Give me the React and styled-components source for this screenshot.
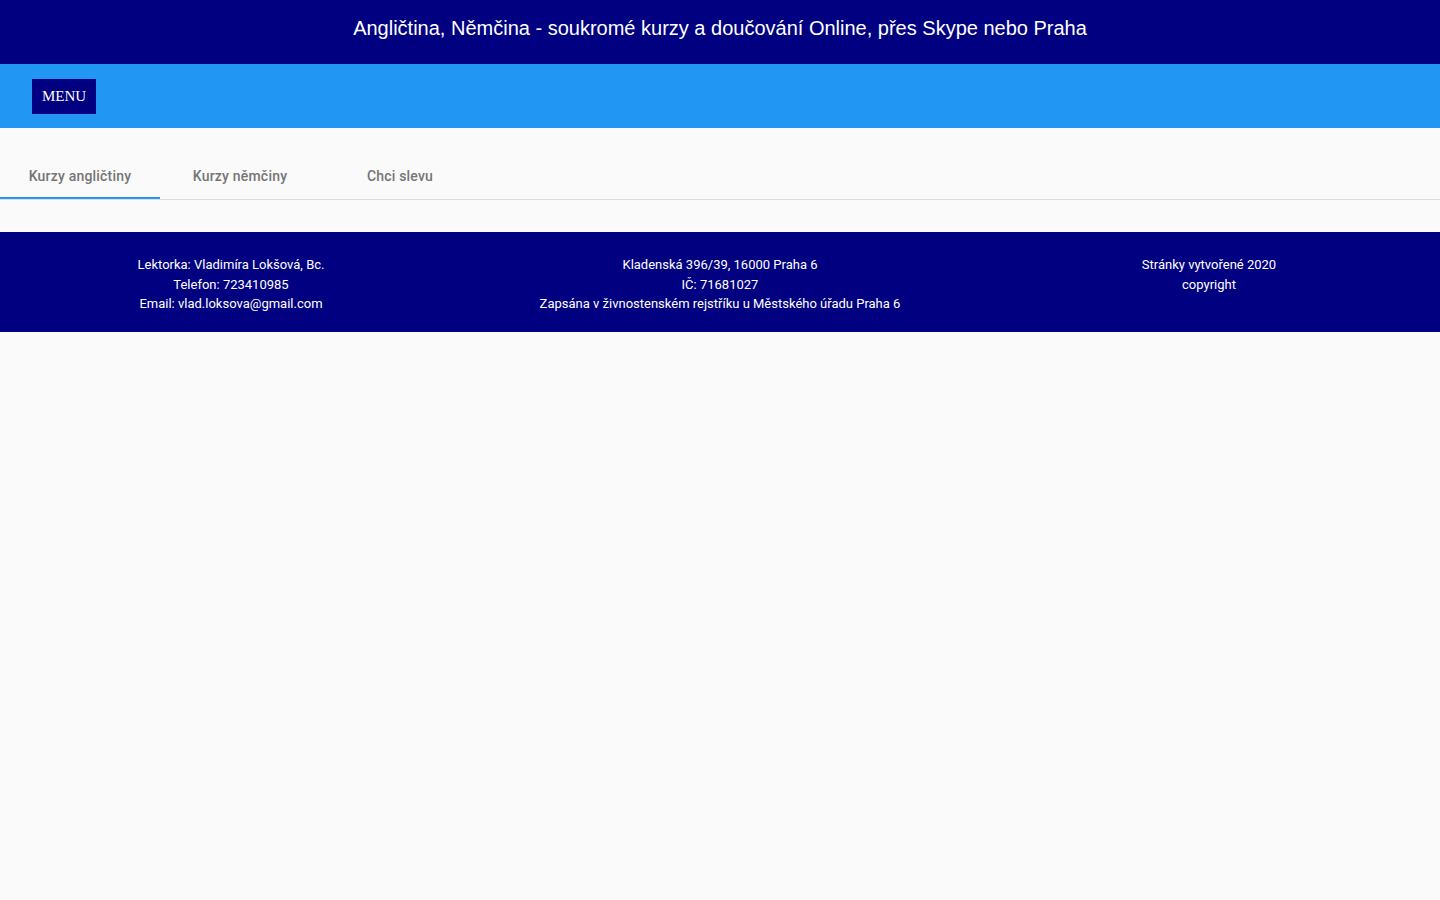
import React from "react";
import styled, { createGlobalStyle } from "styled-components";

const Global = createGlobalStyle`
  body { margin: 0; background: #fafafa; font-family: Roboto, "Noto Sans", sans-serif; }
`;

const Header = styled.header`
  height: 64px;
  background: #000080;
  color: #fff;
  display: flex;
  justify-content: center;
  align-items: center;
  padding-bottom: 8px;
  box-sizing: border-box;
  font-family: "Liberation Sans", Arial, sans-serif;
  font-size: 20px;
`;

const NavBar = styled.div`
  height: 64px;
  background: #2196f3;
  display: flex;
  align-items: center;
  padding-left: 32px;
`;

const MenuButton = styled.button`
  background: #000080;
  color: #fff;
  border: none;
  height: 35px;
  padding: 0 10px;
  font-family: "Liberation Serif", "Times New Roman", serif;
  font-size: 15px;
  cursor: pointer;
`;

const Tabs = styled.div`
  margin-top: 24px;
  display: flex;
  border-bottom: 1px solid #ddd;
`;

const Tab = styled.div`
  width: 160px;
  height: 47px;
  display: flex;
  align-items: center;
  justify-content: center;
  font-size: 14px;
  font-weight: 500;
  color: #757575;
  letter-spacing: 0.2px;
  box-sizing: border-box;
  border-bottom: 2px solid ${({ $active }) => ($active ? "#2196f3" : "transparent")};
  padding-top: 2px;
`;

const Footer = styled.footer`
  margin-top: 32px;
  background: #000080;
  color: #fff;
  display: grid;
  grid-template-columns: 462px 516px 462px;
  padding: 23px 0 18px;
  font-size: 13px;
  line-height: 19.5px;
  text-align: center;
`;

export default function App() {
  return (
    <>
      <Global />
      <Header>Angličtina, Němčina - soukromé kurzy a doučování Online, přes Skype nebo Praha</Header>
      <NavBar>
        <MenuButton>MENU</MenuButton>
      </NavBar>
      <Tabs>
        <Tab $active>Kurzy angličtiny</Tab>
        <Tab>Kurzy němčiny</Tab>
        <Tab>Chci slevu</Tab>
      </Tabs>
      <Footer>
        <div>
          Lektorka: Vladimíra Lokšová, Bc.<br />Telefon: 723410985<br />Email: vlad.loksova@gmail.com
        </div>
        <div>
          Kladenská 396/39, 16000 Praha 6<br />IČ: 71681027<br />Zapsána v živnostenském rejstříku u Městského úřadu Praha 6
        </div>
        <div>
          Stránky vytvořené 2020<br />copyright
        </div>
      </Footer>
    </>
  );
}
